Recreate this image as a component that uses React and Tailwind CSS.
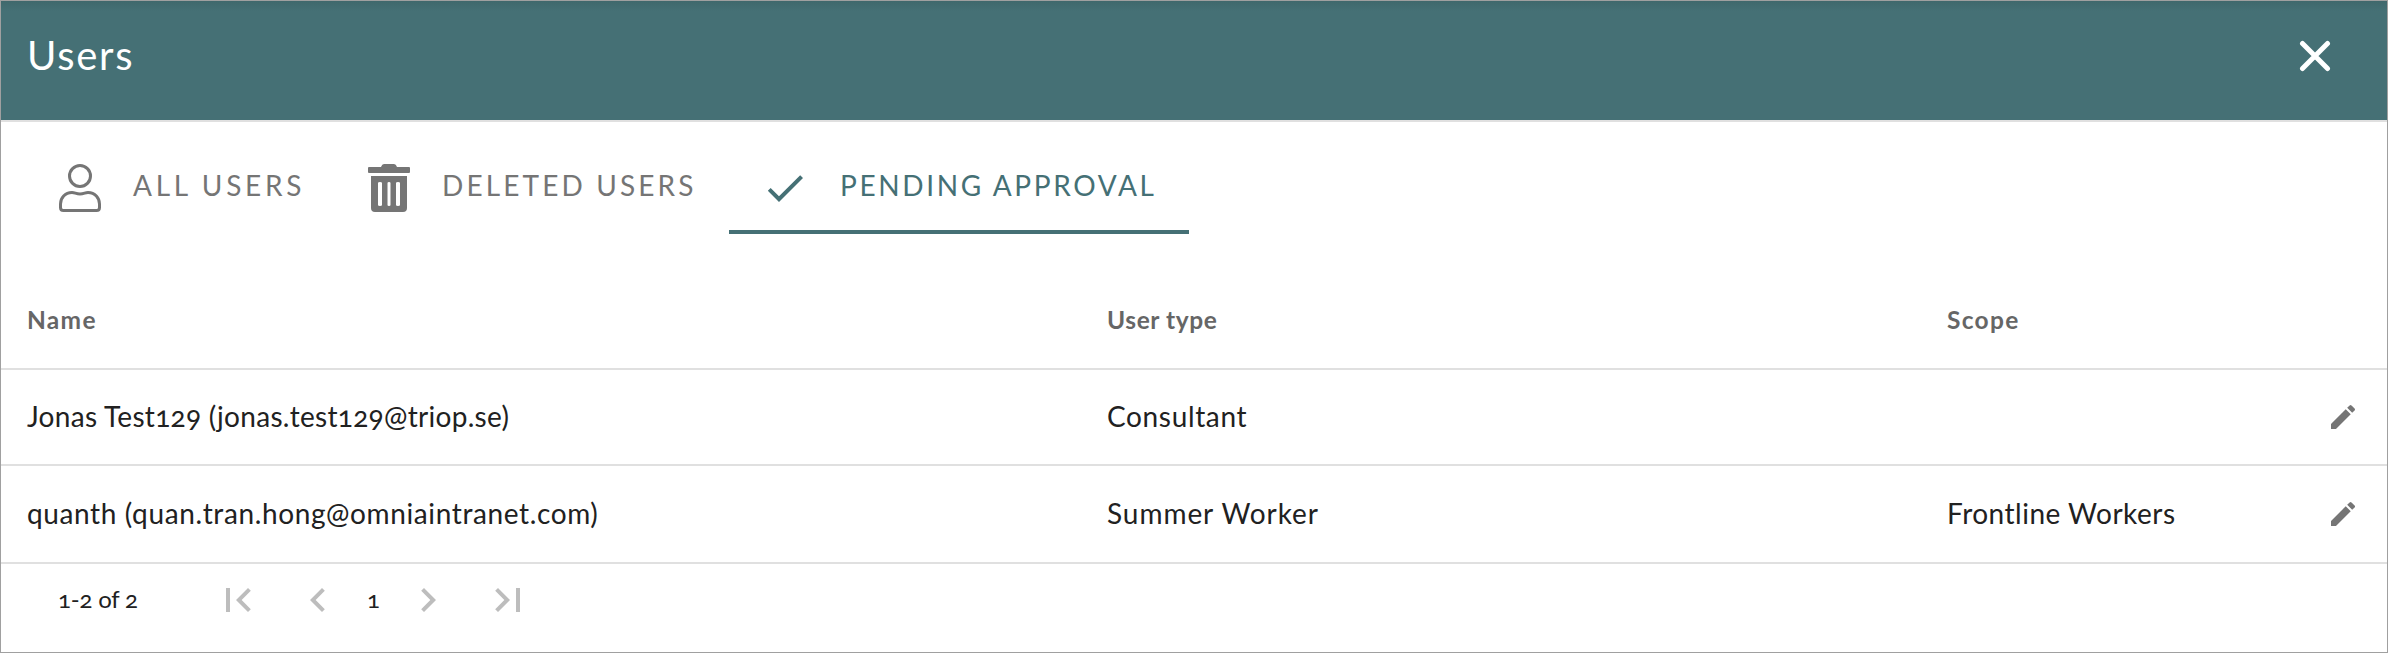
import React from "react";

const rows = [
  { name: "Jonas Test129 (jonas.test129@triop.se)", type: "Consultant", scope: "", h: "h-[96px]", ls: "tracking-[0.29px]", ts: "tracking-[0.65px]" },
  { name: "quanth (quan.tran.hong@omniaintranet.com)", type: "Summer Worker", scope: "Frontline Workers", h: "h-[98px]", ls: "tracking-[0.62px]", ts: "tracking-[0.95px]" },
];

const Icon = ({ d, className }) => (
  <svg viewBox="0 0 24 24" fill="currentColor" className={`shrink-0 ${className}`}>
    <path d={d} />
  </svg>
);

export default function App() {
  return (
    <div className="flex h-[653px] w-[2388px] flex-col border border-[#a0a0a0] bg-white font-['Lato',sans-serif] text-[#212121] [font-feature-settings:'onum']">
      <header className="flex h-[121px] shrink-0 justify-between border-b-2 border-[#e0e0e0] bg-[#457075] bg-linear-to-b from-[#40686c] to-[#457075] to-[10px] pl-[26px] pr-[56px] text-white">
        <h1 className="pt-[30px] text-[40px] leading-[48px]"><span className="tracking-[1.7px]">Users</span></h1>
        <svg viewBox="0 0 32 32" className="mt-[39px] h-8 w-8" stroke="currentColor" strokeWidth="5" strokeLinecap="round">
          <path d="M3.500 3.500 28.500 28.500M28.500 3.500 3.500 28.500" />
        </svg>
      </header>
      <nav className="flex h-[112px] shrink-0 text-[28px] leading-[36px] text-[#757575]">
        <div className="flex pl-[58px] pt-[42px]">
          <svg viewBox="0 0 42 48" className="h-[48px] w-[42px]" fill="none" stroke="currentColor" strokeWidth="3">
            <circle cx="21" cy="12" r="10.5" />
            <path d="M13 28.500C6 28.500 1.500 34 1.500 40v3.500q0 3 3 3h33q3 0 3-3V40c0-6-4.500-11.500-11.500-11.500-3 0-4 1.500-8 1.500s-5-1.500-8-1.500z" />
          </svg>
          <span className="ml-[32px] mt-[3px] w-[201px] whitespace-nowrap"><span className="tracking-[3.7px]">ALL USERS</span></span>
        </div>
        <div className="flex pl-[34px] pt-[42px]">
          <svg viewBox="0 0 42 48" className="h-[48px] w-[42px]" fill="currentColor">
            <path fillRule="evenodd" d="M13 3q1-3 3-3h10q2 0 3 3h12q1 0 1 1v4q0 1-1 1H1q-1 0-1-1V4q0-1 1-1zM3 12h36v32q0 4-4 4H7q-4 0-4-4zM10 19v22q0 1 2 1t2-1V19q0-1-2-1t-2 1zM19.500 19v22q0 1 1.500 1t1.500-1V19q0-1-1.500-1t-1.500 1zM28 19v22q0 1 2 1t2-1V19q0-1-2-1t-2 1z" />
          </svg>
          <span className="ml-[32px] mt-[3px] w-[287px] whitespace-nowrap"><span className="tracking-[3.13px]">DELETED USERS</span></span>
        </div>
        <div className="flex w-[460px] border-b-4 border-[#457075] pl-[32px] pt-[42px] text-[#457075]">
          <Icon className="h-12 w-12" d="M9 16.170 4.830 12l-1.420 1.410L9 19 21 7l-1.410-1.410z" />
          <span className="ml-[31px] mt-[3px] whitespace-nowrap"><span className="tracking-[2.65px]">PENDING APPROVAL</span></span>
        </div>
      </nav>
      <main className="pt-[38px]">
        <div className="flex h-[98px] items-center border-b-2 border-[#e0e0e0] pl-[26px] text-[24.500px] font-bold text-[#666]">
          <span className="w-[1080px]"><span className="tracking-[1.3px]">Name</span></span>
          <span className="w-[840px]"><span className="tracking-[0.6px]">User type</span></span>
          <span><span className="tracking-[1.3px]">Scope</span></span>
        </div>
        {rows.map((r) => (
          <div key={r.name} className={`flex items-center border-b-2 border-[#e0e0e0] pl-[26px] pr-[28px] text-[28px] ${r.h}`}>
            <span className="w-[1080px] pb-[2px]"><span className={r.ls}>{r.name}</span></span>
            <span className="w-[840px] pb-[2px]"><span className={r.ts}>{r.type}</span></span>
            <span className="flex-1 pb-[2px]"><span className="tracking-[0.5px]">{r.scope}</span></span>
            <Icon className="h-8 w-8 text-[#757575]" d="M3 17.250V21h3.750L17.810 9.940l-3.750-3.750L3 17.250zM20.710 7.040a1 1 0 0 0 0-1.410l-2.340-2.340a1 1 0 0 0-1.410 0l-1.830 1.830 3.750 3.750 1.830-1.830z" />
          </div>
        ))}
      </main>
      <footer className="flex pl-[57px] pt-[12px] text-[24px] leading-[46px]">
        <span className="w-[156px]"><span className="tracking-[-0.2px]">1-2 of 2</span></span>
        <Icon className="h-12 w-12 text-[#bdbdbd]" d="M18.410 16.590 13.820 12l4.590-4.590L17 6l-6 6 6 6zM6 6h2v12H6z" />
        <Icon className="ml-[32px] h-12 w-12 text-[#bdbdbd]" d="M15.410 7.410 14 6l-6 6 6 6 1.410-1.410L10.830 12z" />
        <span className="ml-[25px] w-[37px]"><span>1</span></span>
        <Icon className="h-12 w-12 text-[#bdbdbd]" d="M10 6 8.590 7.410 13.170 12l-4.580 4.590L10 18l6-6z" />
        <Icon className="ml-[32px] h-12 w-12 text-[#bdbdbd]" d="M5.590 7.410 10.180 12l-4.590 4.590L7 18l6-6-6-6zM16 6h2v12h-2z" />
      </footer>
    </div>
  );
}
